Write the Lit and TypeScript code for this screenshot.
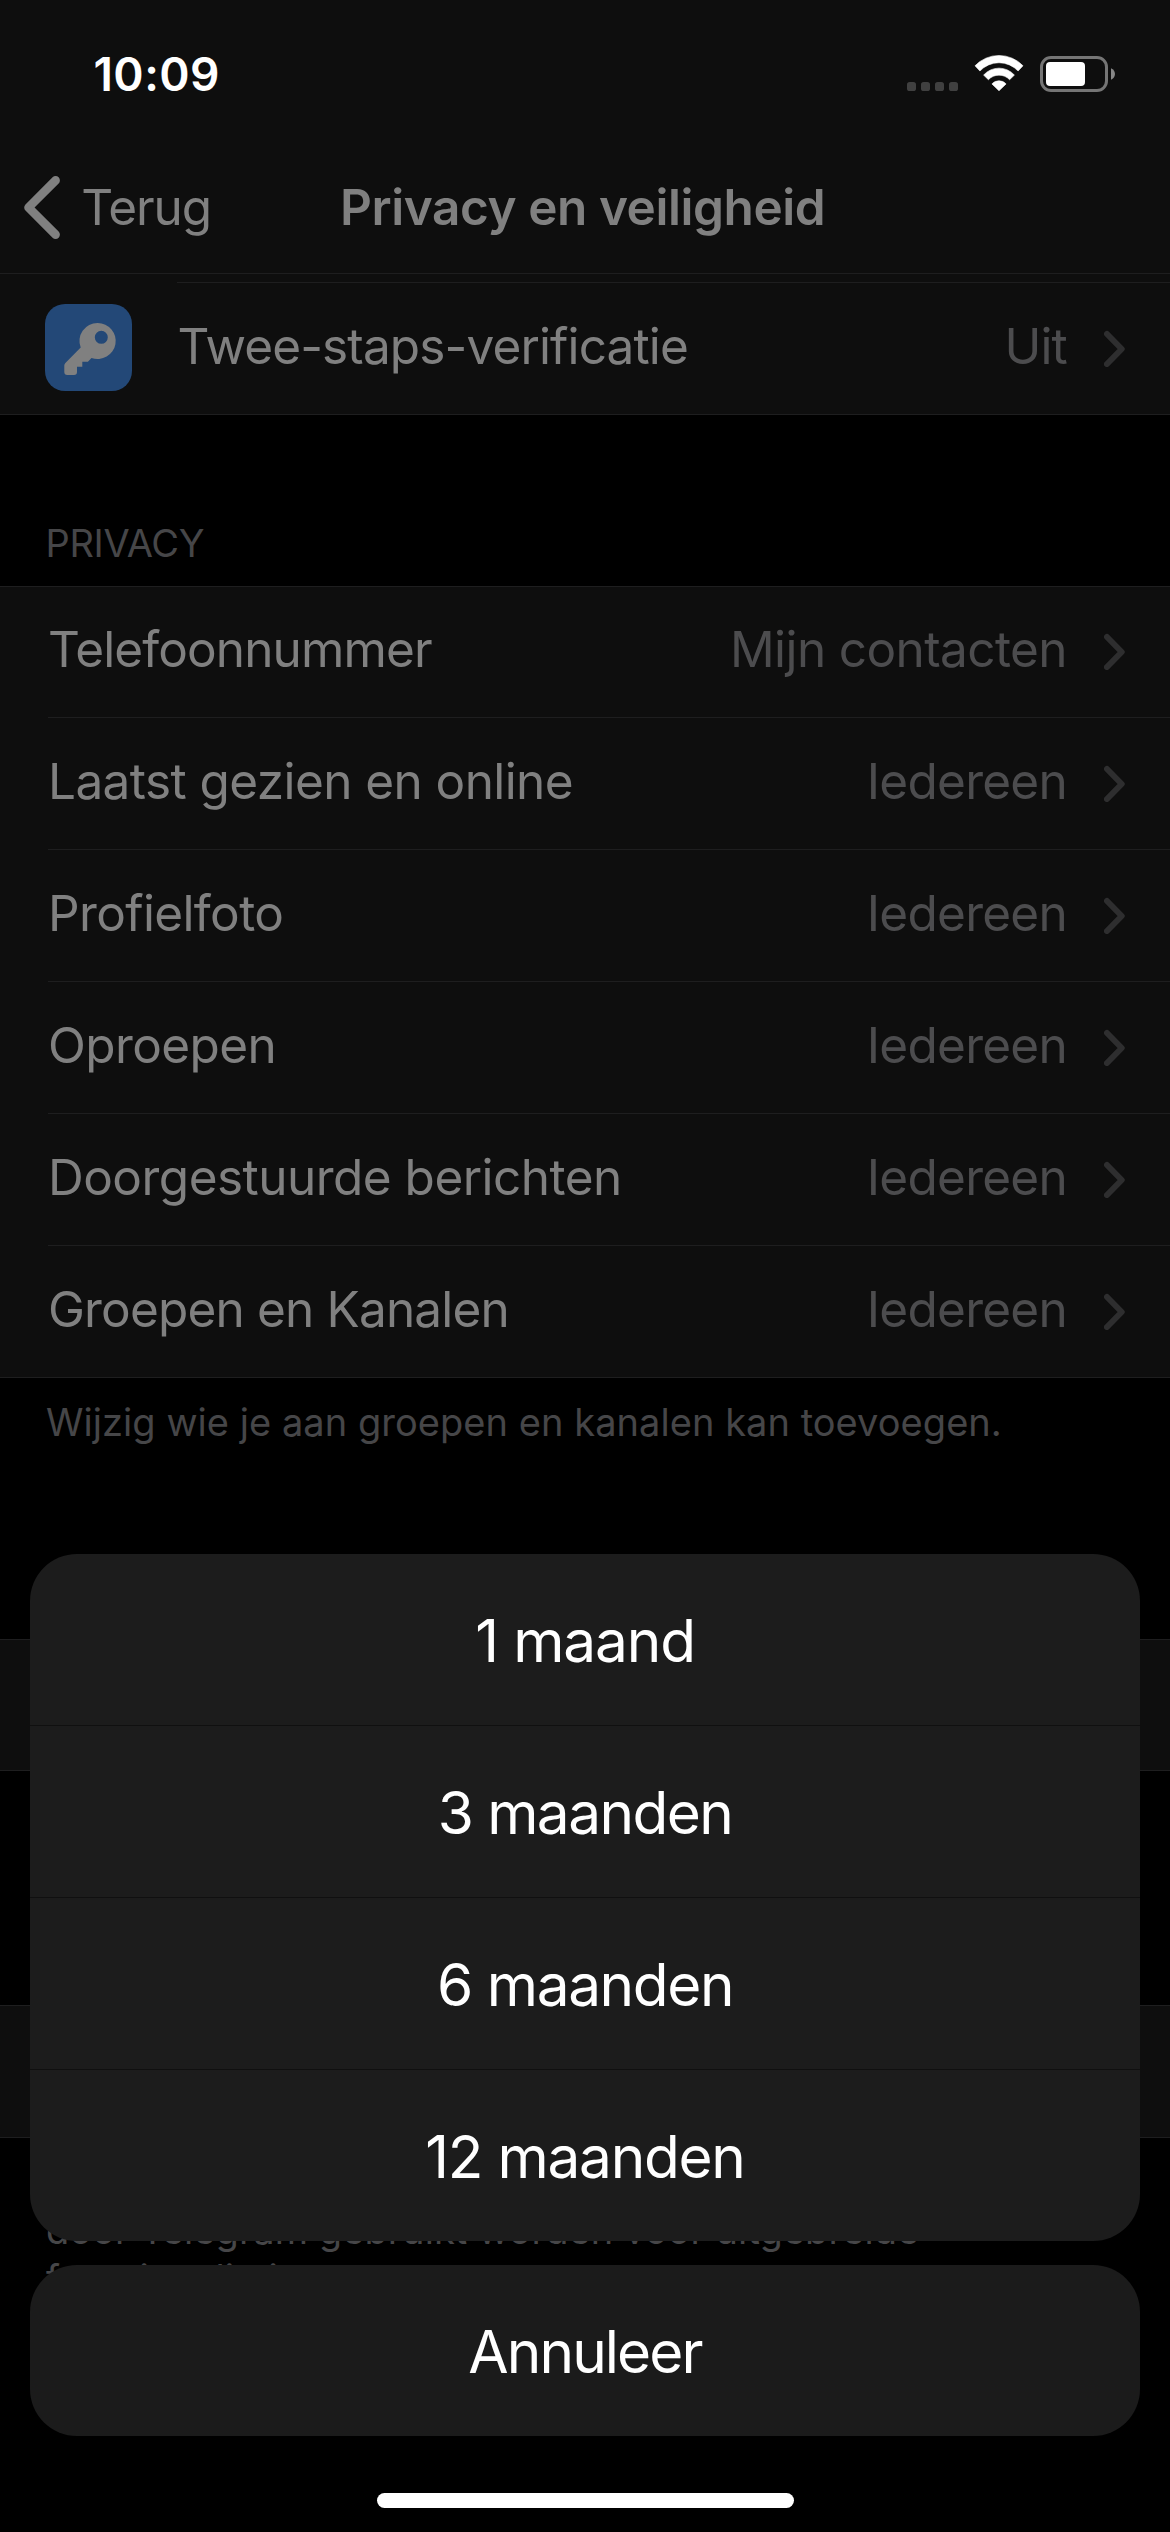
import { LitElement, html, css, svg } from "lit";
import { customElement, property } from "lit/decorators.js";
import { styleMap } from "lit/directives/style-map.js";

interface Copy {
  text: string;
  /** Letter spacing in px. */
  track: number;
}

interface Setting {
  label: Copy;
  value: Copy;
}

const track = (px: number) => styleMap({ letterSpacing: `${px}px` });

const everyone: Copy = { text: "Iedereen", track: -0.74 };

const privacySettings: Setting[] = [
  { label: { text: "Telefoonnummer", track: -0.88 }, value: { text: "Mijn contacten", track: -0.6 } },
  { label: { text: "Laatst gezien en online", track: -0.58 }, value: everyone },
  { label: { text: "Profielfoto", track: -0.63 }, value: everyone },
  { label: { text: "Oproepen", track: -0.61 }, value: everyone },
  { label: { text: "Doorgestuurde berichten", track: -0.52 }, value: everyone },
  { label: { text: "Groepen en Kanalen", track: -0.83 }, value: everyone },
];

const periods: Copy[] = [
  { text: "1 maand", track: -1.13 },
  { text: "3 maanden", track: -1.55 },
  { text: "6 maanden", track: -1.4 },
  { text: "12 maanden", track: -1.26 },
];

@customElement("status-bar")
export class StatusBar extends LitElement {
  static styles = css`
    :host {
      display: flex;
      align-items: center;
      justify-content: space-between;
      box-sizing: border-box;
      height: 148px;
      padding: 0 54px 0 93.5px;
    }
    .time {
      color: #fff;
      font-size: 46px;
      font-weight: 600;
      line-height: 56px;
      letter-spacing: 0.42px;
    }
    .icons {
      display: flex;
      gap: 16px;
    }
    svg {
      display: block;
    }
  `;

  render() {
    return html`
      <span class="time">10:09</span>
      <div class="icons">
        <svg width="51" height="38" viewBox="0 0 51 38" fill="#404040">
          ${[0, 14, 28, 42].map((x) => svg`<rect x=${x} y="27" width="9" height="9" rx="2.6" />`)}
        </svg>
        <svg width="50" height="38" viewBox="0 0 50 38" fill="#fff" stroke="#fff" stroke-width="0.6" stroke-linejoin="round">
          <path d="M1 10.8A33 33 0 0 1 49 10.8L44.1 16A26.2 26.2 0 0 0 5.9 16Z" />
          <path d="M9.6 20.1A20.5 20.5 0 0 1 40.4 20.1L35.6 24.7A14.6 14.6 0 0 0 14.4 24.7Z" />
          <path d="M17.9 28.9A9.6 9.6 0 0 1 32.1 28.9L25 35.8Z" />
        </svg>
        <svg width="76" height="38" viewBox="0 0 76 38">
          <rect x="1.5" y="2.5" width="65" height="33" rx="9.5" fill="none" stroke="#757575" stroke-width="3" />
          <rect x="6" y="7" width="39" height="24" rx="4" fill="#fff" />
          <path d="M71 13.2C73.4 14.2 75 16.4 75 19S73.4 23.8 71 24.8Z" fill="#868686" />
        </svg>
      </div>
    `;
  }
}

@customElement("setting-row")
export class SettingRow extends LitElement {
  @property({ attribute: false }) setting!: Setting;

  static styles = css`
    :host {
      display: flex;
      align-items: center;
      box-sizing: border-box;
      height: 132px;
      padding-right: 45px;
      border-bottom: 1px solid #1e1e1f;
      font-size: 49.5px;
      line-height: 60px;
      white-space: nowrap;
    }
    .label,
    .value {
      padding-bottom: 5px;
    }
    .label {
      flex: 1;
      color: #808080;
    }
    .value {
      margin-right: 37px;
      color: #4c4c4e;
    }
    svg {
      display: block;
    }
  `;

  render() {
    const { label, value } = this.setting;
    return html`
      <slot name="icon"></slot>
      <span class="label" style=${track(label.track)}>${label.text}</span>
      <span class="value" style=${track(value.track)}>${value.text}</span>
      <svg width="21" height="37" viewBox="0 0 21 37" fill="none" stroke="#2e2e2f" stroke-width="6" stroke-linecap="round" stroke-linejoin="round">
        <path d="M3 4L17.7 19L3 34" />
      </svg>
    `;
  }
}

@customElement("action-sheet")
export class ActionSheet extends LitElement {
  static styles = css`
    :host {
      display: flex;
      flex-direction: column;
      gap: 24px;
    }
    .card {
      border-radius: 47px;
      background: #1c1c1c;
      overflow: hidden;
    }
    .cancel {
      background: #1b1b1b;
    }
    .option {
      display: flex;
      align-items: center;
      justify-content: center;
      box-sizing: border-box;
      height: 171px;
      padding-top: 2px;
      color: #fff;
      font-size: 58.5px;
      line-height: 70px;
      white-space: nowrap;
    }
    .card .option + .option {
      height: 172px;
      border-top: 1px solid #101010;
    }
  `;

  render() {
    return html`
      <div class="card">
        ${periods.map((p) => html`<div class="option" style=${track(p.track)}>${p.text}</div>`)}
      </div>
      <div class="card cancel">
        <div class="option" style=${track(-1.9)}>Annuleer</div>
      </div>
    `;
  }
}

@customElement("app-root")
export class AppRoot extends LitElement {
  static styles = css`
    :host {
      display: block;
      position: relative;
      width: 1170px;
      height: 2532px;
      overflow: hidden;
      background: #000;
      font-family: Inter, "Liberation Sans", sans-serif;
    }
    .header {
      border-bottom: 1px solid #1e1e1f;
      background: #0e0e0e;
    }
    .nav {
      display: flex;
      align-items: center;
      box-sizing: border-box;
      height: 125px;
      padding: 0 0 7px 24px;
      color: #808080;
      font-size: 49.5px;
      line-height: 60px;
      white-space: nowrap;
    }
    .nav svg {
      display: block;
    }
    .back {
      display: flex;
      align-items: center;
      gap: 21.3px;
      width: 316px;
      letter-spacing: -1.11px;
    }
    .title {
      font-weight: 600;
      letter-spacing: -0.43px;
    }
    .group {
      background: #0e0e0e;
      box-shadow: inset 0 1px 0 #1e1e1f;
    }
    .group.continued {
      box-shadow: none;
    }
    .previous {
      height: 8px;
      margin-left: 177px;
      border-bottom: 1px solid #1e1e1f;
    }
    .row {
      margin-left: 48px;
    }
    .row:last-child {
      margin-left: 0;
      padding-left: 48px;
    }
    .row.with-icon {
      padding-left: 45px;
    }
    .key {
      display: block;
      margin: 0 45.5px 2px 0;
    }
    .heading,
    .note {
      color: #464648;
      font-size: 38px;
      line-height: 48px;
      white-space: nowrap;
    }
    .heading {
      padding: 104px 0 19px 45.5px;
      letter-spacing: -0.34px;
    }
    .note {
      padding: 20px 0 193px 46px;
      letter-spacing: 0.05px;
    }
    .covered {
      box-sizing: border-box;
      height: 132px;
      border-bottom: 1px solid #1e1e1f;
    }
    .covered.second {
      height: 133px;
      margin-top: 234px;
    }
    .note.contacts {
      padding: 68px 0 0 46px;
      letter-spacing: 0.07px;
    }
    .sheet {
      position: absolute;
      top: 1554px;
      left: 30px;
      right: 30px;
    }
    .home {
      position: absolute;
      left: 377px;
      bottom: 24px;
      width: 417px;
      height: 15px;
      border-radius: 8px;
      background: #fff;
    }
  `;

  render() {
    return html`
      <div class="header">
        <status-bar></status-bar>
        <div class="nav">
          <div class="back">
            <svg width="36" height="63" viewBox="0 0 36 63" fill="none" stroke="#808080" stroke-width="8.6" stroke-linecap="round" stroke-linejoin="round">
              <path d="M31.6 4.4L4.5 31.5L31.6 58.6" />
            </svg>
            <span>Terug</span>
          </div>
          <span class="title">Privacy en veiligheid</span>
        </div>
      </div>
      <div class="group continued">
        <div class="previous"></div>
        <setting-row
          class="row with-icon"
          .setting=${{
            label: { text: "Twee-staps-verificatie", track: -0.87 },
            value: { text: "Uit", track: -0.81 },
          }}
        >
          <svg slot="icon" class="key" width="87" height="87" viewBox="0 0 87 87">
            <rect width="87" height="87" rx="20" fill="#234877" />
            <path
              fill="#808080"
              fill-rule="evenodd"
              d="M52.7 19A18 18 0 1 1 46.5 53.9L42.9 57.7H37.3V62.7H32V68Q32 71 29 71H22.3Q19.3 71 19.3 68V61.5Q19.3 60 20.4 58.9L35.7 43.6A18 18 0 0 1 52.7 19ZM56.3 26.8A6.5 6.5 0 1 0 56.3 39.8A6.5 6.5 0 1 0 56.3 26.8Z"
            />
          </svg>
        </setting-row>
      </div>
      <div class="heading">PRIVACY</div>
      <div class="group">
        ${privacySettings.map((s) => html`<setting-row class="row" .setting=${s}></setting-row>`)}
      </div>
      <div class="note">Wijzig wie je aan groepen en kanalen kan toevoegen.</div>
      <div class="group covered"></div>
      <div class="group covered second"></div>
      <div class="note contacts">door Telegram gebruikt worden voor uitgebreide<br />functionaliteit.</div>
      <action-sheet class="sheet"></action-sheet>
      <div class="home"></div>
    `;
  }
}
